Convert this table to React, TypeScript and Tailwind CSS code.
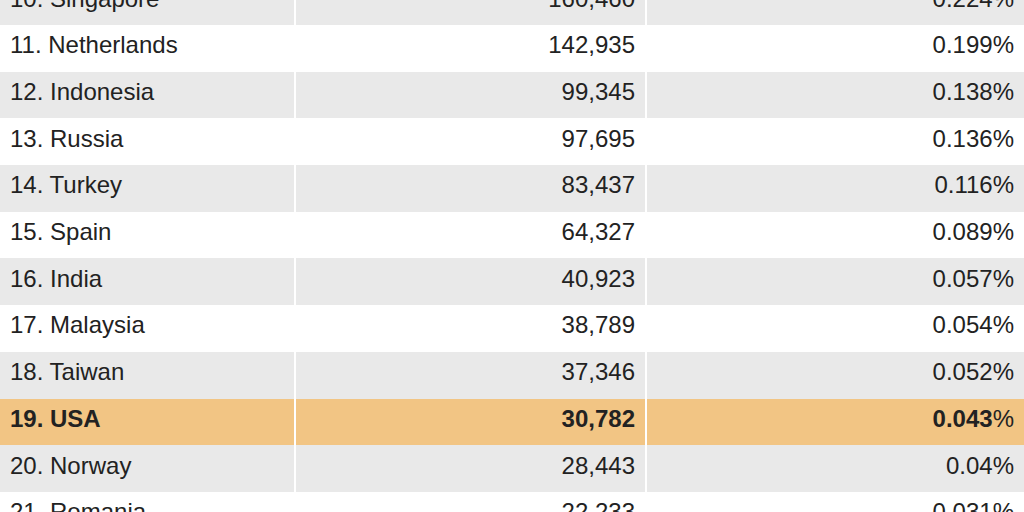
import React from "react";

const rows: [string, string, string, boolean?][] = [
  ["10. Singapore", "160,460", "0.224%"],
  ["11. Netherlands", "142,935", "0.199%"],
  ["12. Indonesia", "99,345", "0.138%"],
  ["13. Russia", "97,695", "0.136%"],
  ["14. Turkey", "83,437", "0.116%"],
  ["15. Spain", "64,327", "0.089%"],
  ["16. India", "40,923", "0.057%"],
  ["17. Malaysia", "38,789", "0.054%"],
  ["18. Taiwan", "37,346", "0.052%"],
  ["19. USA", "30,782", "0.043%", true],
  ["20. Norway", "28,443", "0.04%"],
  ["21. Romania", "22,233", "0.031%"],
];

export default function App() {
  return (
    <div
      className="w-[1024px] h-[512px] overflow-hidden bg-white text-[#222222]"
      style={{ fontFamily: '"Liberation Sans", Arial, sans-serif' }}
    >
      <div className="-mt-[21.7px] flex flex-col">
        {rows.map(([name, count, pct, hl], i) => {
          const bg = hl ? "bg-[#f2c584]" : i % 2 === 0 ? "bg-[#e9e9e9]" : "bg-white";
          return (
            <div key={i} className="flex h-[46.7px] text-[24px] leading-none">
              <div className={`${bg} w-[294px] flex items-center pl-[10px] pb-[6px] ${hl ? "font-bold" : ""}`}>
                {name}
              </div>
              <div className="w-[2px] bg-white" />
              <div className={`${bg} w-[349px] flex items-center justify-end pr-[10px] pb-[6px] ${hl ? "font-bold" : ""}`}>
                {count}
              </div>
              <div className="w-[2px] bg-white" />
              <div className={`${bg} flex-1 flex items-center justify-end pr-[10px] pb-[6px] ${hl ? "font-bold" : ""}`}>
                {hl ? (
                  <span>
                    0.043<span className="font-normal">%</span>
                  </span>
                ) : (
                  pct
                )}
              </div>
            </div>
          );
        })}
      </div>
    </div>
  );
}
